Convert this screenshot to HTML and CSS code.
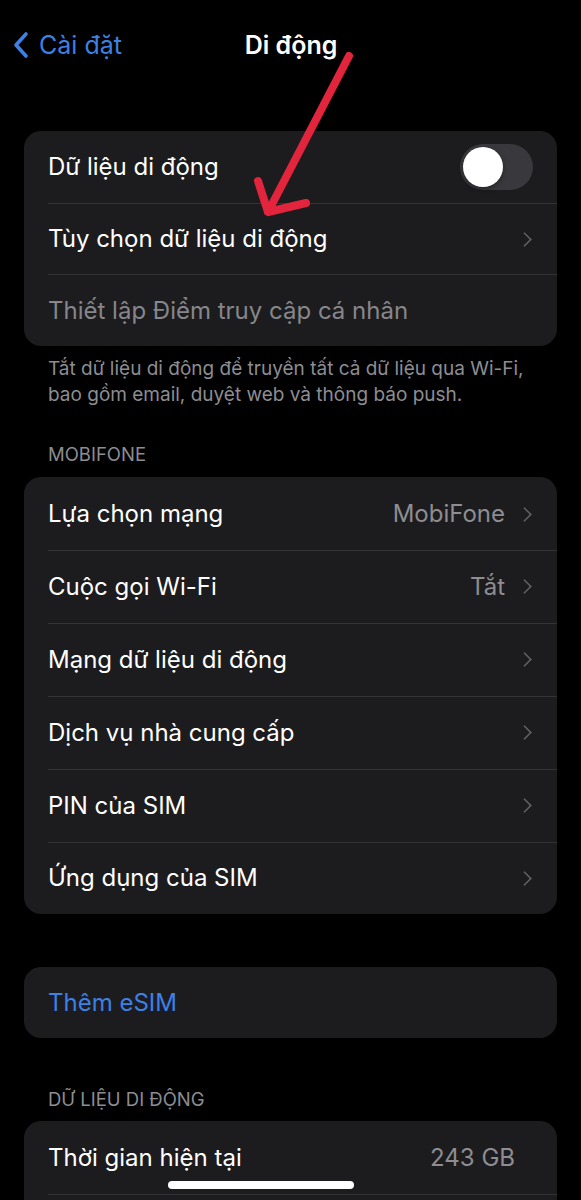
FILE: index.html
```html
<!DOCTYPE html>
<html lang="vi">
<head>
<meta charset="utf-8">
<title>Di động</title>
<link rel="stylesheet" href="styles.css">
</head>
<body>
<div class="screen">
  <header class="nav">
    <div class="back">
      <svg class="back-icon" width="18" height="28" viewBox="0 0 18 28"><path d="M14 3 L4 14 L14 25" fill="none" stroke="#3d80e6" stroke-width="3.6" stroke-linecap="round" stroke-linejoin="round"/></svg>
      <span>Cài đặt</span>
    </div>
    <h1 class="title">Di động</h1>
  </header>

  <main class="content">
    <section class="group group-tight">
      <div class="row">
        <span class="label">Dữ liệu di động</span>
        <span class="toggle"><span class="knob"></span></span>
      </div>
      <div class="row">
        <span class="label">Tùy chọn dữ liệu di động</span>
        <span class="chev"></span>
      </div>
      <div class="row">
        <span class="label muted">Thiết lập Điểm truy cập cá nhân</span>
      </div>
    </section>
    <p class="footnote">Tắt dữ liệu di động để truyền tất cả dữ liệu qua Wi-Fi, bao gồm email, duyệt web và thông báo push.</p>

    <h2 class="section-title">MOBIFONE</h2>
    <section class="group">
      <div class="row"><span class="label">Lựa chọn mạng</span><span class="value">MobiFone</span><span class="chev"></span></div>
      <div class="row"><span class="label">Cuộc gọi Wi-Fi</span><span class="value">Tắt</span><span class="chev"></span></div>
      <div class="row"><span class="label">Mạng dữ liệu di động</span><span class="chev"></span></div>
      <div class="row"><span class="label">Dịch vụ nhà cung cấp</span><span class="chev"></span></div>
      <div class="row"><span class="label">PIN của SIM</span><span class="chev"></span></div>
      <div class="row"><span class="label">Ứng dụng của SIM</span><span class="chev"></span></div>
    </section>

    <section class="group group-esim">
      <div class="row"><span class="label link">Thêm eSIM</span></div>
    </section>

    <h2 class="section-title second">DỮ LIỆU DI ĐỘNG</h2>
    <section class="group">
      <div class="row"><span class="label">Thời gian hiện tại</span><span class="value value-end">243 GB</span></div>
      <div class="row"></div>
    </section>
  </main>

  <svg class="arrow" width="581" height="260" viewBox="0 0 581 260">
    <path d="M349 56 L268 212 M258 181 L268 212 L306 203" fill="none" stroke="#e2253c" stroke-width="8" stroke-linecap="round" stroke-linejoin="round"/>
  </svg>
  <div class="home-indicator"></div>
</div>
</body>
</html>
```

FILE: styles.css
```css
* { box-sizing: border-box; }
html, body {
  margin: 0;
  padding: 0;
  background: #000;
}
body {
  font-family: Inter, "Noto Sans", "DejaVu Sans", sans-serif;
  color: #fff;
}
.screen {
  position: relative;
  width: 581px;
  height: 1200px;
  overflow: hidden;
  background: #000;
}
.nav {
  height: 90px;
  display: flex;
  align-items: center;
  justify-content: center;
  position: relative;
}
.back {
  position: absolute;
  left: 12px;
  top: 31px;
  display: flex;
  align-items: center;
  gap: 9px;
  color: #3d80e6;
  font-size: 25px;
  line-height: 28px;
}
.back-icon { display: block; }
.title {
  margin: 0;
  font-size: 25px;
  font-weight: 600;
  line-height: 28px;
  margin-left: 1px;
}
.content {
  padding-top: 41px;
}
.group {
  margin: 0 24px;
  background: #1c1c1e;
  border-radius: 17px;
  overflow: hidden;
}
.row {
  height: 72.9px;
  display: flex;
  align-items: center;
  padding: 0 24px;
  position: relative;
  font-size: 24px;
}
.group-tight .row { height: 71.7px; }
.row + .row::before {
  content: "";
  position: absolute;
  left: 24px;
  right: 0;
  top: 0;
  height: 1px;
  background: #333336;
}
.label {
  flex: 1;
  white-space: nowrap;
  color: #fff;
}
.label.muted { color: #86868b; }
.label.link { color: #3d80e6; }
.value {
  color: #8d8d92;
  margin-right: 15px;
}
.value-end { margin-right: 18px; }
.chev {
  width: 12px;
  height: 18px;
  position: relative;
  margin-right: 1px;
}
.chev::before {
  content: "";
  position: absolute;
  width: 9px;
  height: 9px;
  border-top: 2.6px solid #5b5b60;
  border-right: 2.6px solid #5b5b60;
  transform: rotate(45deg);
  left: -1px;
  top: 4px;
  border-radius: 1px;
}
.toggle {
  width: 73px;
  height: 46px;
  border-radius: 23px;
  background: #39393d;
  padding: 3px;
  display: flex;
  align-items: center;
}
.knob {
  width: 40px;
  height: 40px;
  border-radius: 50%;
  background: #fff;
  box-shadow: 0 2px 5px rgba(0,0,0,0.4);
}
.footnote {
  margin: 10px 40px 0 48px;
  font-size: 19px;
  line-height: 26px;
  color: #8d8d92;
}
.section-title {
  margin: 35px 48px 12px;
  font-size: 18.5px;
  font-weight: 400;
  line-height: 22px;
  color: #8d8d92;
}
.group-esim {
  margin-top: 53px;
}
.group-esim .row { height: 71px; }
.section-title.second {
  margin-top: 50px;
  margin-bottom: 11px;
}
.arrow {
  position: absolute;
  left: 0;
  top: 0;
  pointer-events: none;
}
.home-indicator {
  position: absolute;
  left: 168px;
  top: 1181px;
  width: 186px;
  height: 8px;
  border-radius: 4px;
  background: #fff;
}
```
